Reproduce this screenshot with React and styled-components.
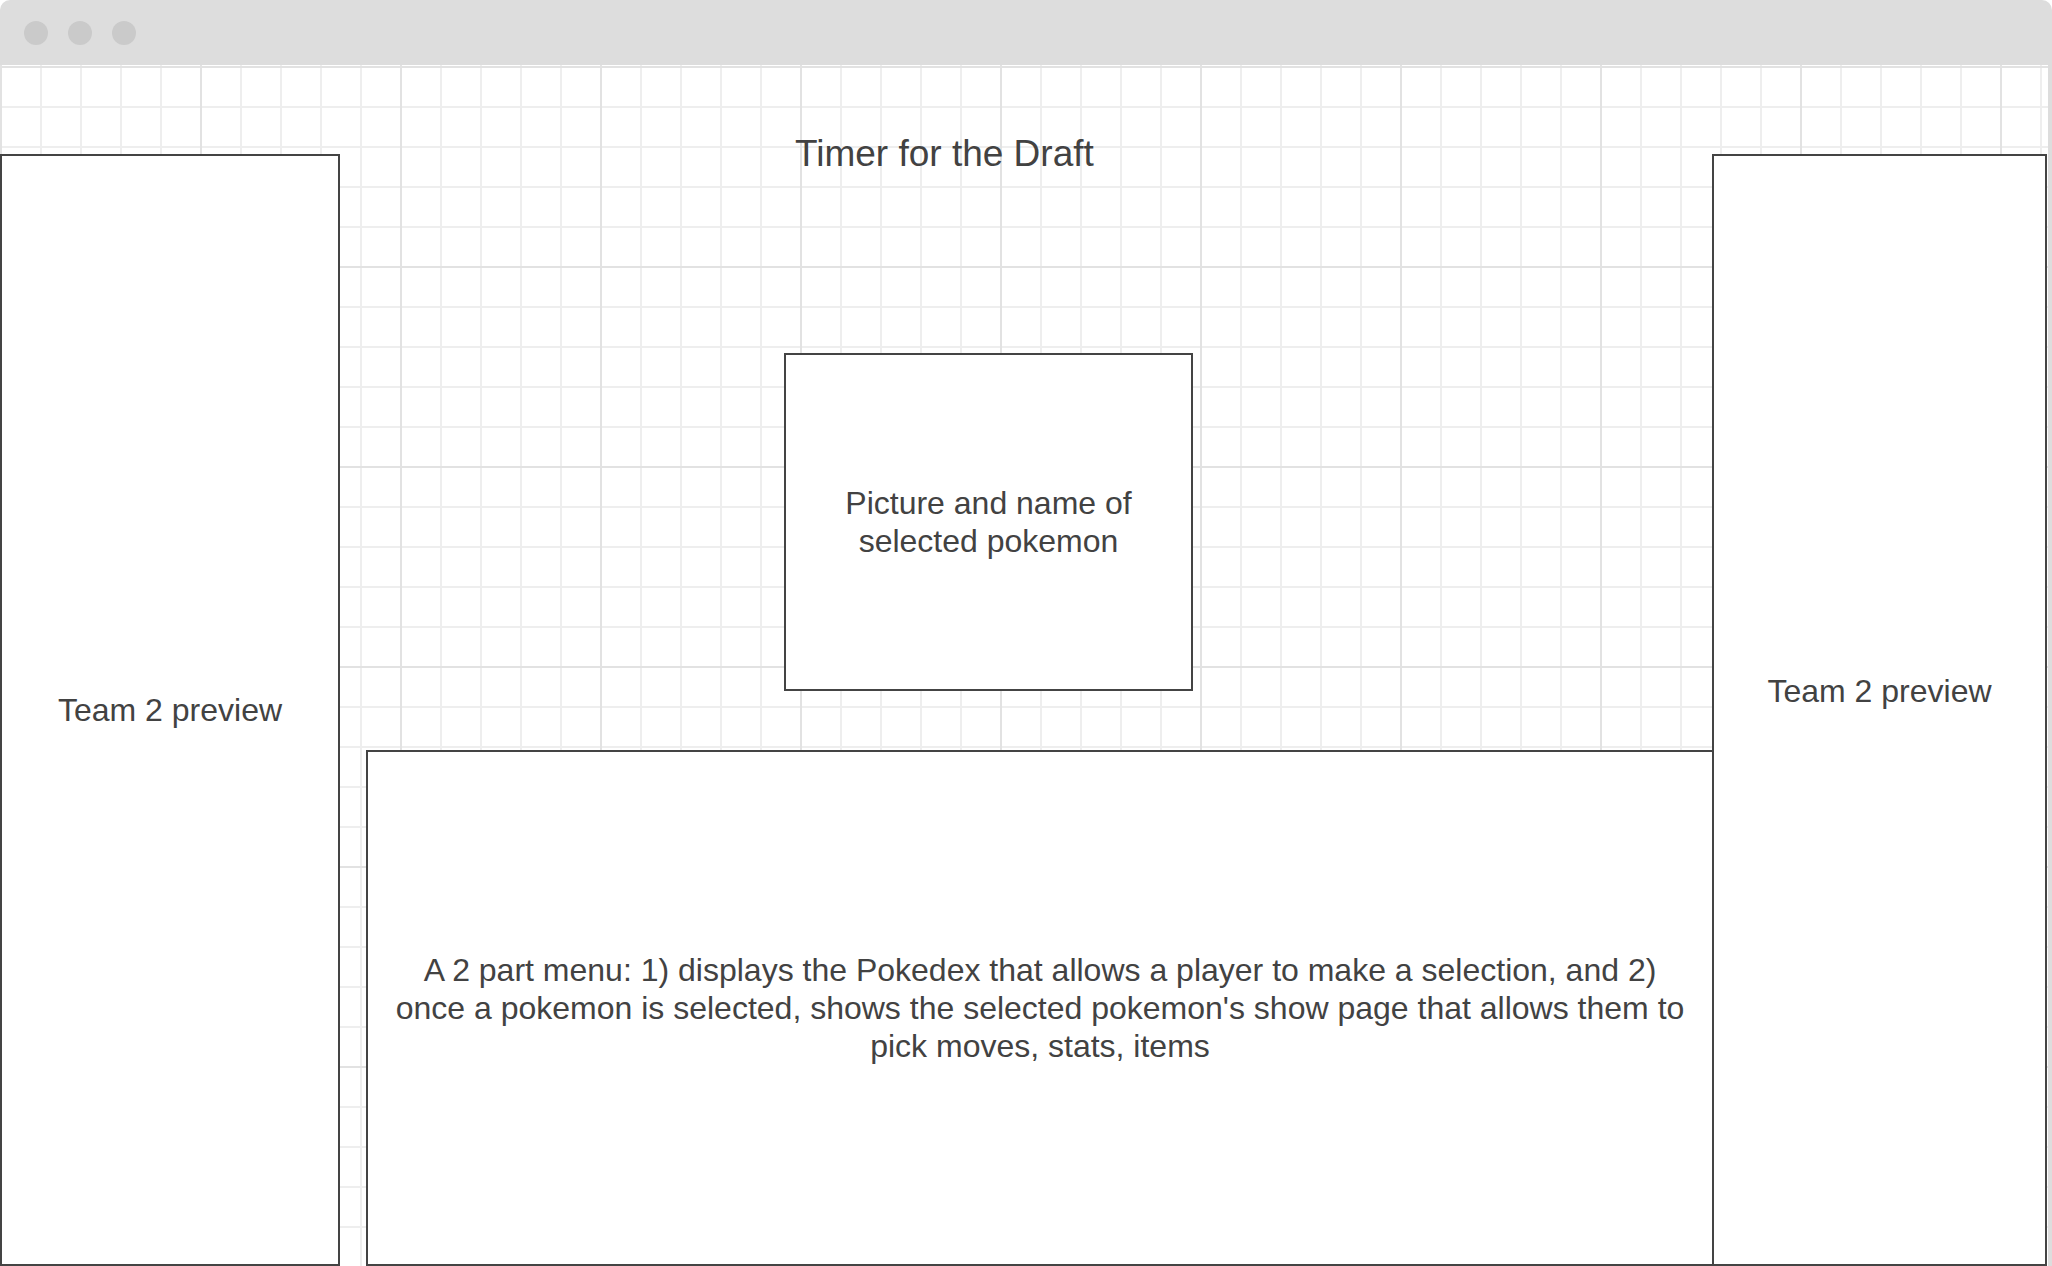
import styled, { createGlobalStyle } from "styled-components";

const GlobalStyle = createGlobalStyle`
  html,
  body {
    margin: 0;
    padding: 0;
    background: #ffffff;
  }

  #root {
    width: 100vw;
    height: 100vh;
    overflow: hidden;
  }
`;

const Window = styled.div`
  display: flex;
  flex-direction: column;
  width: 2052px;
  height: 1266px;
  font-family: "Liberation Sans", Arial, sans-serif;
  color: #424242;
`;

const TitleBar = styled.div`
  display: flex;
  align-items: center;
  gap: 20px;
  flex: 0 0 65px;
  padding-left: 24px;
  background: #dddddd;
  border-radius: 10px 10px 0 0;
`;

const Dot = styled.span`
  width: 24px;
  height: 24px;
  border-radius: 50%;
  background: #cacaca;
`;

const Canvas = styled.div`
  display: flex;
  flex: 1;
  border-right: 4px solid #dddddd;
  background-color: #ffffff;
  background-image:
    linear-gradient(to right, #e2e2e2 2px, transparent 2px),
    linear-gradient(to bottom, #e2e2e2 2px, transparent 2px),
    linear-gradient(to right, #eeeeee 2px, transparent 2px),
    linear-gradient(to bottom, #eeeeee 2px, transparent 2px);
  background-size: 200px 200px, 200px 200px, 40px 40px, 40px 40px;
  background-position: 0 1px;
`;

const Box = styled.div`
  display: flex;
  align-items: center;
  justify-content: center;
  box-sizing: border-box;
  border: 2px solid #444444;
  background: #ffffff;
  font-size: 32px;
  line-height: 38px;
  text-align: center;
`;

const SidePanel = styled(Box)`
  flex: 0 0 ${({ $width }) => $width}px;
  margin-top: 89px;
  margin-left: ${({ $overlap }) => ($overlap ? "-2px" : "0")};
  padding-bottom: ${({ $lift }) => $lift || 0}px;
`;

const Middle = styled.div`
  display: flex;
  flex-direction: column;
  align-items: flex-start;
  flex: 0 0 1374px;
  padding-top: 67px;
  box-sizing: border-box;
`;

const Title = styled.div`
  margin-left: 455px;
  font-size: 37px;
  line-height: 44px;
`;

const SelectedCard = styled(Box)`
  width: 409px;
  height: 338px;
  margin: 177px 0 0 444px;
  padding: 0 16px;
`;

const MenuPanel = styled(Box)`
  align-self: stretch;
  flex: 1;
  margin: 59px 0 0 26px;
`;

export default function App() {
  return (
    <>
      <GlobalStyle />
      <Window>
        <TitleBar>
          <Dot />
          <Dot />
          <Dot />
        </TitleBar>
        <Canvas>
          <SidePanel $width={340}>Team 2 preview</SidePanel>
          <Middle>
            <Title>Timer for the Draft</Title>
            <SelectedCard>Picture and name of selected pokemon</SelectedCard>
            <MenuPanel>
              A 2 part menu: 1) displays the Pokedex that allows a player to
              make a selection, and 2)
              <br />
              once a pokemon is selected, shows the selected pokemon's show
              page that allows them to
              <br />
              pick moves, stats, items
            </MenuPanel>
          </Middle>
          <SidePanel $width={335} $overlap $lift={38}>
            Team 2 preview
          </SidePanel>
        </Canvas>
      </Window>
    </>
  );
}
